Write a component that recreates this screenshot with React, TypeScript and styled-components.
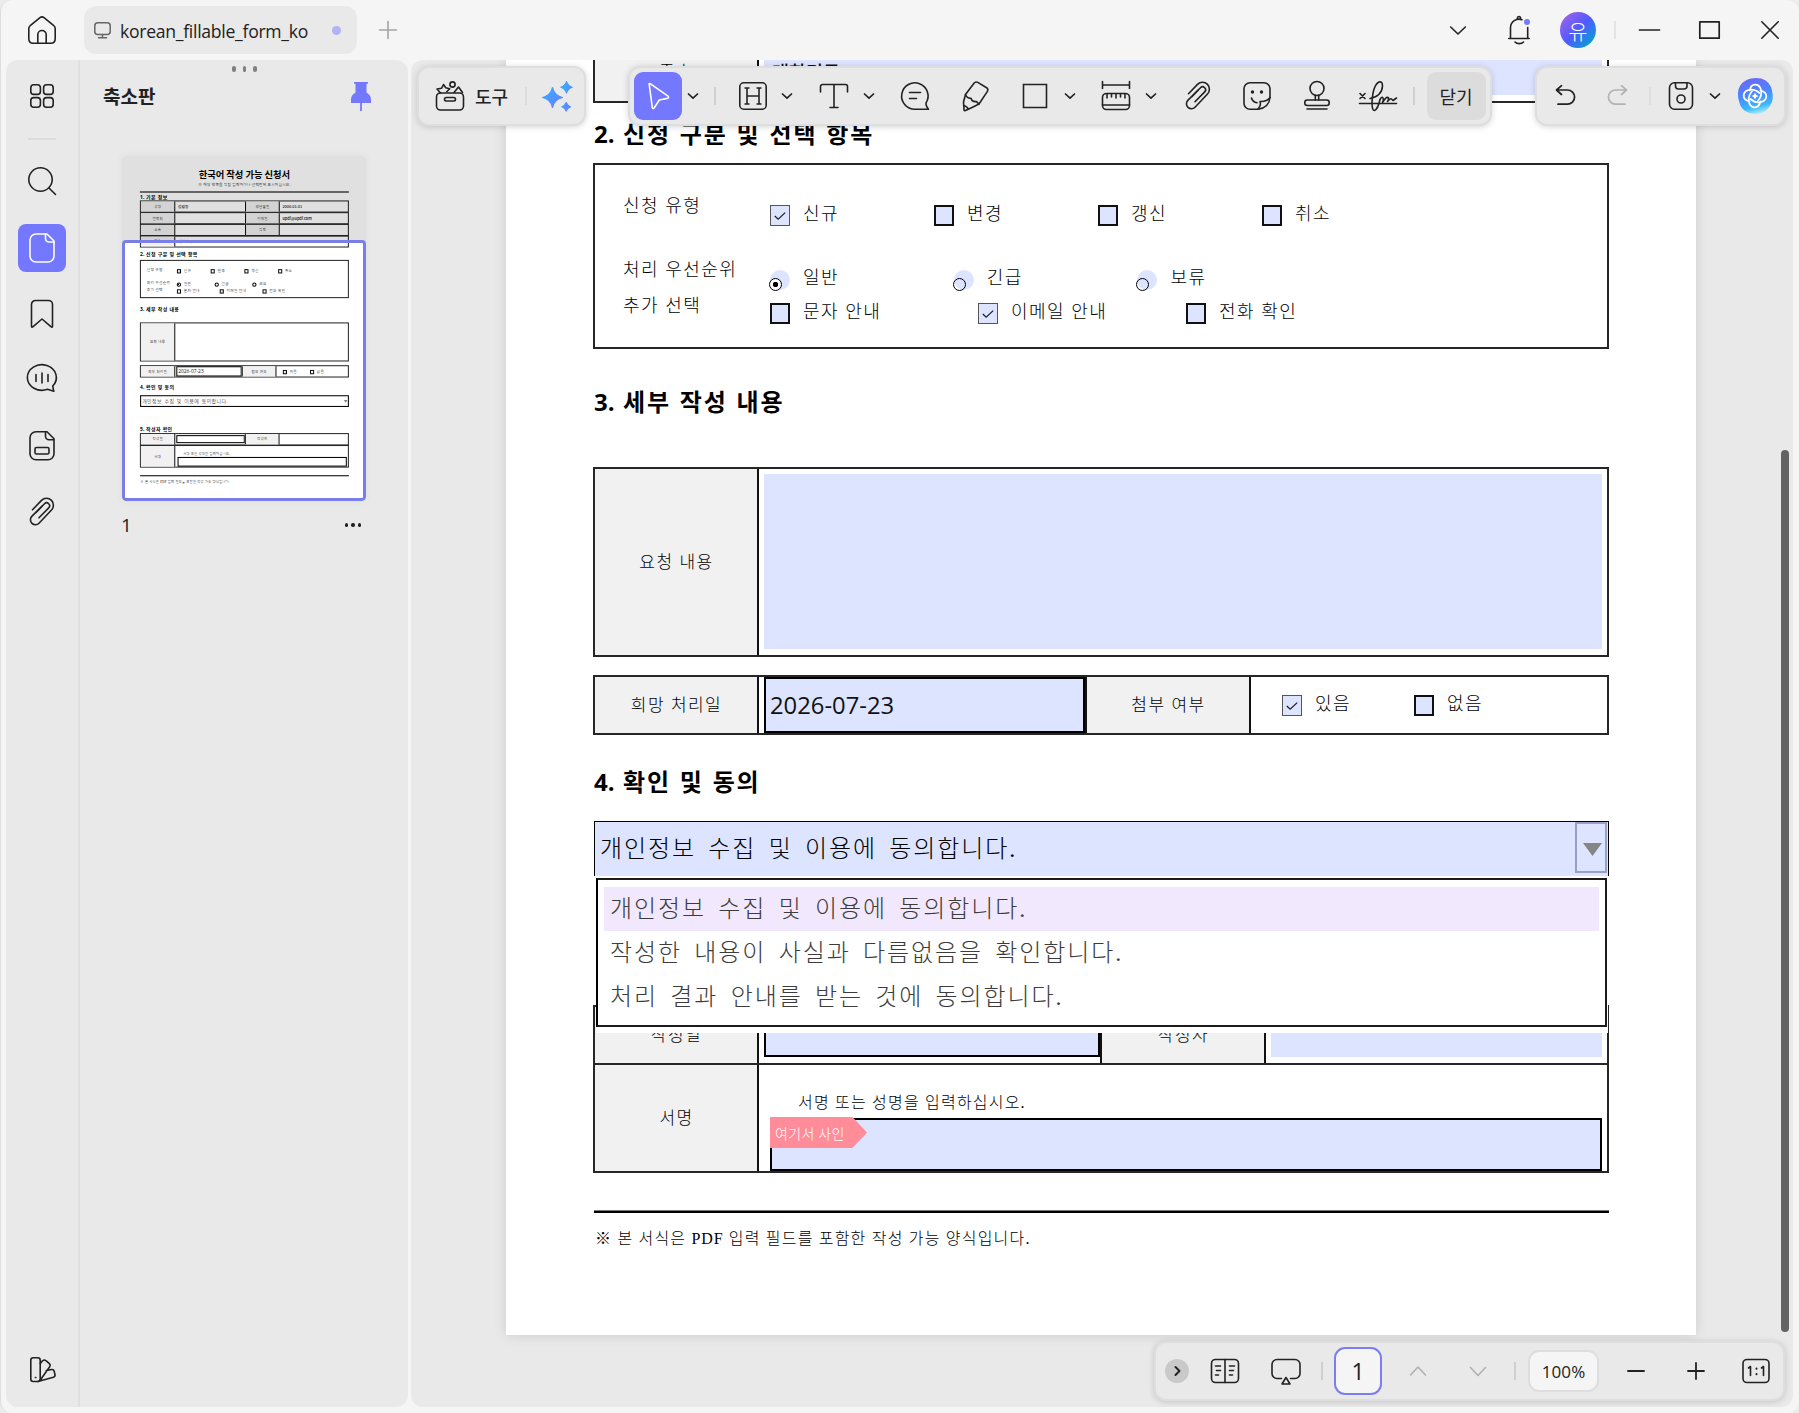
import React from "react";
import styled, { createGlobalStyle, css, ThemeProvider } from "styled-components";

declare module "styled-components" {
  export interface DefaultTheme {
    mini: boolean;
    line: number;
    field: string;
  }
}

const pageTheme = { mini: false, line: 2, field: "#dde4ff" };
const thumbTheme = { mini: true, line: 5, field: "transparent" };

const INK = "#222";
const ACCENT = "#7378ff";
const PANEL = "#e9e9e9";

const sans = `"Open Sans", "Noto Sans CJK KR", sans-serif`;
const korean = `"Noto Sans CJK KR", sans-serif`;
const serif = `"Liberation Serif", "Noto Sans CJK KR", serif`;

const GlobalStyle = createGlobalStyle`
  * { box-sizing: border-box; }
  body { margin: 0; background: #ececec; font-family: ${sans}; color: ${INK}; }
  svg { display: block; flex: none; overflow: visible; }
`;

/* ---------- window ---------- */

const Window = styled.div`
  width: 1799px;
  height: 1413px;
  display: flex;
  flex-direction: column;
  background: #f5f5f5;
  border-left: 1px solid #dedede;
  border-radius: 12px;
  overflow: hidden;
`;

const TitleBar = styled.header`
  height: 60px;
  flex: none;
  display: flex;
  align-items: center;
  padding-left: 27px;
`;

const Tab = styled.div`
  width: 273px;
  height: 48px;
  margin-left: 28px;
  padding: 0 16px 0 10px;
  border-radius: 12px;
  background: ${PANEL};
  display: flex;
  align-items: center;
`;

const TabName = styled.span`
  margin-left: 9px;
  padding-top: 1px;
  font-size: 17.6px;
  line-height: 26px;
  letter-spacing: -0.28px;
  white-space: nowrap;
  flex: 1;
`;

const Dot = styled.i`
  width: 9px;
  height: 9px;
  border-radius: 50%;
  background: #b0b3f5;
`;

const Gap = styled.div<{ $ml?: number; $mt?: number }>`
  flex: none;
  display: flex;
  align-items: center;
  justify-content: center;
  margin-left: ${(p) => p.$ml ?? 0}px;
  margin-top: ${(p) => p.$mt ?? 0}px;
`;

const Avatar = styled.div`
  width: 36px;
  height: 36px;
  margin-left: 30px;
  border-radius: 50%;
  background: linear-gradient(135deg, #a463e6 5%, #4f5bff 50%, #00a6cf 92%);
  color: #fff;
  font: 300 21px/36px ${korean};
  text-align: center;
`;

const Divider = styled.i<{ $ml: number; $h?: number; $c?: string }>`
  width: 2px;
  height: ${(p) => p.$h ?? 18}px;
  flex: none;
  margin-left: ${(p) => p.$ml}px;
  background: ${(p) => p.$c ?? "#cfcfcf"};
`;

const Body = styled.div`
  display: flex;
  height: 1347px;
  padding: 0 6px 0 5px;
  gap: 3px;
`;

const SidePanel = styled.aside`
  width: 402px;
  flex: none;
  display: flex;
  background: ${PANEL};
  border-radius: 12px;
`;

const Rail = styled.nav`
  width: 74px;
  border-right: 2px solid #e0e0e0;
  display: flex;
  flex-direction: column;
  align-items: center;
`;

const RailButton = styled.div<{ $active?: boolean; $mt: number }>`
  width: 48px;
  height: 48px;
  margin-top: ${(p) => p.$mt}px;
  display: flex;
  align-items: center;
  justify-content: center;
  border-radius: 8px;
  background: ${(p) => (p.$active ? ACCENT : "transparent")};
`;

const RailRule = styled.i`
  width: 28px;
  height: 2px;
  margin-top: 18px;
  background: #dcdcdc;
`;

const Thumbs = styled.section`
  flex: 1;
  display: flex;
  flex-direction: column;
`;

const Grip = styled.div`
  display: flex;
  gap: 7px;
  height: 18px;
  padding: 6px 0 0 152px;
  i { width: 3.5px; height: 6px; border-radius: 2px; background: #808080; }
`;

const ThumbHead = styled.div`
  height: 36px;
  padding: 0 37px 0 23px;
  display: flex;
  align-items: center;
  justify-content: space-between;
  font: 700 19px/30px ${korean};
`;

const ThumbFrame = styled.div`
  position: relative;
  width: 244px;
  height: 345px;
  margin: 42px 0 0 42px;
  background: #fff;
  border-radius: 4px;
  box-shadow: 0 0 8px rgba(0, 0, 0, 0.05);
  overflow: hidden;
`;

const ThumbScale = styled.div`
  width: 1190px;
  height: 1677px;
  transform: scale(0.2057);
  transform-origin: 0 0;
`;

const ThumbShade = styled.div`
  position: absolute;
  inset: 0 0 auto 0;
  height: 86px;
  background: rgba(0, 0, 0, 0.12);
`;

const ThumbView = styled.div`
  position: absolute;
  inset: 84px 0 0 0;
  border: 3px solid #7a7fe8;
  border-radius: 4px;
`;

const ThumbFoot = styled.div`
  display: flex;
  align-items: center;
  justify-content: space-between;
  width: 240px;
  margin: 10px 0 0 41px;
  font-size: 19px;
  line-height: 28px;
`;

const More = styled.span`
  display: flex;
  gap: 3px;
  i { width: 3.4px; height: 3.4px; border-radius: 50%; background: ${INK}; }
`;

/* ---------- document stage ---------- */

const Stage = styled.main`
  position: relative;
  flex: 1;
  background: ${PANEL};
  border-radius: 12px;
  overflow: hidden;
`;

const Sheet = styled.div`
  display: flow-root;
  width: 1190px;
  height: 1275px;
  margin-left: 95px;
  padding-left: 87px;
  background: #fff;
  box-shadow: 0 0 12px rgba(0, 0, 0, 0.13);
`;

const ThumbSheet = styled(Sheet)`
  height: 1677px;
  margin-left: 0;
  box-shadow: none;
`;

const Toolbar = styled.div<{ $x: number; $w: number; $bottom?: boolean }>`
  position: absolute;
  left: ${(p) => p.$x}px;
  width: ${(p) => p.$w}px;
  height: 60px;
  ${(p) => (p.$bottom ? "bottom: 6px;" : "top: 6px;")}
  display: flex;
  align-items: center;
  background: ${PANEL};
  border: 2px solid #dedede;
  border-radius: 12px;
  box-shadow: 0 1px 6px rgba(0, 0, 0, 0.16);
`;

const ToolLabel = styled.span`
  margin-left: 9px;
  font: 500 18px/26px ${korean};
`;

const ActiveTool = styled.div`
  width: 48px;
  height: 48px;
  flex: none;
  margin-left: 4px;
  display: flex;
  align-items: center;
  justify-content: center;
  background: ${ACCENT};
  border-radius: 9px;
`;

const CloseTool = styled.div`
  width: 59px;
  height: 48px;
  flex: none;
  margin-left: 12px;
  background: #dcdcdc;
  border-radius: 9px;
  font: 400 18px/48px ${korean};
  text-align: center;
`;

const NextDot = styled.div`
  width: 24px;
  height: 24px;
  margin-left: 9px;
  border-radius: 50%;
  background: #c9c9c9;
  display: flex;
  align-items: center;
  justify-content: center;
`;

const PageBox = styled.div`
  width: 48px;
  height: 48px;
  flex: none;
  margin-left: 11px;
  border: 2px solid #7b7fee;
  border-radius: 11px;
  background: #f5f5f5;
  font-size: 23px;
  line-height: 45px;
  text-align: center;
`;

const ZoomBox = styled.div`
  width: 71px;
  height: 42px;
  flex: none;
  margin-left: 12px;
  border: 2px solid #dedede;
  border-radius: 11px;
  background: #f5f5f5;
  font-size: 17px;
  line-height: 39px;
  letter-spacing: 0.1px;
  text-align: center;
`;

const ScrollThumb = styled.div`
  position: absolute;
  left: 1370px;
  top: 390px;
  width: 8px;
  height: 882px;
  border-radius: 4px;
  background: #636363;
`;

/* ---------- form ---------- */

const H = styled.h2<{ $h: number; $pt: number }>`
  margin: 0;
  height: ${(p) => p.$h}px;
  padding: ${(p) => p.$pt}px 0 0 1px;
  font: 700 24px/30px ${korean};
  letter-spacing: 1.9px;
  word-spacing: 1.5px;
  color: #000;
  white-space: nowrap;
  span { display: inline-block; width: 29px; letter-spacing: 0; font-family: "Open Sans", sans-serif; }
`;

const body = css`
  font: 300 18px/24px ${serif};
  letter-spacing: 1.45px;
  word-spacing: 0.2px;
  color: #000;
  white-space: nowrap;
`;

const note = css`
  font: 300 16px/24px ${serif};
  letter-spacing: 1.2px;
  color: #000;
  white-space: nowrap;
`;

const Row = styled.div<{ $h: number; $mt?: number }>`
  position: relative;
  display: flex;
  width: 1016px;
  height: ${(p) => p.$h}px;
  margin-top: ${(p) => p.$mt ?? 0}px;
  border: ${(p) => p.theme.line}px solid #262626;
`;

const Label = styled.div<{ $w?: number; $line?: boolean; $raise?: boolean }>`
  width: ${(p) => p.$w ?? 162}px;
  flex: none;
  padding: ${(p) => (p.$raise ? "0 0 4px" : "2px 0 0 1px")};
  background: #f1f1f1;
  display: flex;
  align-items: center;
  justify-content: center;
  ${(p) => p.$line && `border-left: ${p.theme.line}px solid #111;`}
  ${body}
  font-size: 17px;
`;

const Cell = styled.div<{ $w?: number; $pad?: string }>`
  ${(p) => (p.$w ? `width: ${p.$w}px; flex: none;` : "flex: 1;")}
  display: flex;
  padding: ${(p) => p.$pad ?? "5px"};
  border-left: ${(p) => p.theme.line}px solid #111;
`;

const InfoCell = styled(Cell)`
  align-items: center;
`;

const Field = styled.div<{ $border?: boolean }>`
  flex: 1;
  display: flex;
  align-items: center;
  background: ${(p) => p.theme.field};
  ${(p) => p.$border && `border: ${p.theme.line}px solid #000;`}
`;

const DateText = styled.span`
  padding-left: 4px;
  margin-top: -1px;
  font: 400 23.8px/30px "Open Sans", sans-serif;
  color: #111;
`;

const EntryText = styled.span<{ $raise?: boolean }>`
  padding: 0 0 ${(p) => (p.$raise ? 6 : 0)}px 8px;
  font: 500 18.5px/24px ${korean};
  color: #111;
`;

const OptionBox = styled.div`
  width: 1016px;
  height: 186px;
  padding: 29px 0 0 28px;
  border: ${(p) => p.theme.line}px solid #262626;
`;

const OptionRow = styled.div<{ $h: number; $step: number; $drop: number }>`
  display: grid;
  grid-template-columns: 147px repeat(4, ${(p) => p.$step}px);
  height: ${(p) => p.$h}px;
  ${body}
  > * + * { margin-top: ${(p) => p.$drop}px; }
`;

const AttachRow = styled.div`
  display: grid;
  grid-template-columns: 132px 132px;
`;

const Choice = styled.div`
  display: flex;
  height: 24px;
  gap: 13px;
  ${body}
`;

const Box = styled.i<{ $on?: boolean }>`
  width: 20px;
  height: 21px;
  flex: none;
  margin-top: 3px;
  display: flex;
  align-items: center;
  justify-content: center;
  background: ${(p) => p.theme.field};
  border: ${(p) => (p.theme.mini ? 5 : p.$on ? 1 : 2)}px solid ${(p) => (p.$on && !p.theme.mini ? "#555" : "#111")};
`;

const Radio = styled.i<{ $on?: boolean }>`
  width: 20px;
  height: 20px;
  flex: none;
  margin-top: 4px;
  border-radius: 50%;
  background: ${(p) => p.theme.field};
  display: flex;
  align-items: flex-end;
  &::after {
    content: "";
    width: 11px;
    height: 11px;
    margin: 0 0 -1px -1px;
    border-radius: 50%;
    border: ${(p) => (p.theme.mini ? 5 : 1.6)}px solid #000;
    background: ${(p) => (p.$on ? "radial-gradient(circle, #000 2.4px, #fff 3px)" : "transparent")};
  }
`;

const Combo = styled.div<{ $h: number }>`
  display: flex;
  align-items: flex-start;
  justify-content: space-between;
  width: 1015px;
  height: ${(p) => p.$h}px;
  margin-left: 1px;
  padding-right: 1px;
  background: ${(p) => p.theme.field};
  border: ${(p) => (p.theme.mini ? 5 : 1.5)}px solid #000;
  ${(p) => !p.theme.mini && "border-bottom: none;"}
`;

const choiceText = css`
  font: 300 24px/30px ${serif};
  letter-spacing: 1.92px;
  word-spacing: 4.4px;
  white-space: nowrap;
`;

const ComboText = styled.span`
  padding: 12px 0 0 5px;
  color: #000;
  ${choiceText}
`;

const ComboArrow = styled.div`
  width: 32px;
  height: 51px;
  padding: 4px 0 0 2px;
  display: flex;
  align-items: center;
  justify-content: center;
  border: 2px solid #98a0c4;
`;

const ListHolder = styled.div`
  position: relative;
  height: 127px;
`;

const List = styled.div`
  position: absolute;
  z-index: 2;
  left: 3px;
  top: 0;
  width: 1012px;
  height: 157px;
  padding: 2px 1px 6px 0;
  background: #fff;
`;

const ListInner = styled.div`
  height: 149px;
  padding: 7px 6px;
  border: 2px solid #1c1c1c;
  border-left-color: #000;
`;

const Option = styled.div<{ $on?: boolean }>`
  height: 44px;
  padding: 7px 0 0 6px;
  color: #3c3c3c;
  background: ${(p) => (p.$on ? "#f2e8fd" : "transparent")};
  ${choiceText}
`;

const SignCell = styled.div`
  flex: 1;
  display: flex;
  flex-direction: column;
  padding: 26px 5px 0 11px;
  border-left: ${(p) => p.theme.line}px solid #111;
`;

const SignHint = styled.span`
  padding-left: 28px;
  margin-bottom: 3px;
  ${note}
`;

const SignField = styled.div`
  position: relative;
  flex: 1;
  background: ${(p) => p.theme.field};
  border: ${(p) => p.theme.line}px solid #000;
`;

const SignTag = styled.div`
  position: absolute;
  left: -2px;
  top: -3px;
  width: 97px;
  height: 31px;
  padding-left: 5px;
  background: #ff8c98;
  clip-path: polygon(0 0, 85% 0, 100% 50%, 85% 100%, 0 100%);
  color: #fff;
  font: 300 14px/33px ${korean};
  letter-spacing: 0.4px;
`;

const Rule = styled.div`
  width: 1015px;
  height: ${(p) => (p.theme.mini ? 5 : 3)}px;
  margin: 37px 0 0 1px;
  background: linear-gradient(#777 0 1px, #000 1px);
`;

const Footnote = styled.p`
  margin: 14px 0 0 2px;
  ${note}
  span { font-weight: 400; letter-spacing: 0.9px; }
`;

const FormTop = styled.div`
  width: 1016px;
  padding-top: 57px;
  text-align: center;
`;

const FormTitle = styled.div`
  font: 700 45px/60px ${korean};
  color: #000;
`;

const FormSub = styled.div`
  margin-top: 14px;
  ${note}
  font-size: 18px;
  line-height: 20px;
`;

const TopRule = styled.div`
  height: 6px;
  margin-top: 21px;
  background: #222;
`;

const Tri = () => (
  <svg width="19" height="13" viewBox="0 0 19 13">
    <path d="M0 0h19l-9.5 13z" fill="#858585" />
  </svg>
);

const Tick = () => (
  <svg width="12" height="8" viewBox="0 0 12 8">
    <path d="M.8 4l3.4 3.2L11.2.6" fill="none" stroke="#222" strokeWidth="1.3" />
  </svg>
);

const Check = ({ on, children }: { on?: boolean; children: string }) => (
  <Choice>
    <Box $on={on}>{on && <Tick />}</Box>
    {children}
  </Choice>
);

const Pick = ({ on, children }: { on?: boolean; children: string }) => (
  <Choice>
    <Radio $on={on} />
    {children}
  </Choice>
);

const CONSENT = "개인정보 수집 및 이용에 동의합니다.";

function InfoRow({ a, av, b, bv, mt }: { a: string; av?: string; b: string; bv?: string; mt?: number }) {
  return (
    <Row $h={59} $mt={mt}>
      <Label>{a}</Label>
      <InfoCell $w={344}>
        <EntryText>{av}</EntryText>
      </InfoCell>
      <Label $w={164} $line>{b}</Label>
      <InfoCell>
        <EntryText>{bv}</EntryText>
      </InfoCell>
    </Row>
  );
}

function Form({ mini }: { mini?: boolean }) {
  return (
    <>
      {mini && (
        <>
          <FormTop>
            <FormTitle>한국어 작성 가능 신청서</FormTitle>
            <FormSub>※ 해당 항목을 직접 입력하거나 선택란에 표시하십시오.</FormSub>
            <TopRule />
          </FormTop>
          <H $h={38} $pt={8}>
            <span>1.</span>기본 정보
          </H>
          <InfoRow a="성명" av="김길동" b="생년월일" bv="2000.01.01" />
          <InfoRow a="연락처" b="이메일" bv="updf@updf.com" mt={-2} />
          <InfoRow a="소속" b="직책" mt={-2} />
        </>
      )}
      <Row $h={58} $mt={mini ? -2 : -15}>
        <Label $raise>주소</Label>
        <Cell $pad="5px 5px 6px">
          <Field>
            <EntryText $raise>대한민국</EntryText>
          </Field>
        </Cell>
      </Row>
      <H $h={60} $pt={15}>
        <span>2.</span>신청 구분 및 선택 항목
      </H>
      <OptionBox>
        <OptionRow $h={64} $step={164} $drop={8}>
          <div>신청 유형</div>
          <Check on>신규</Check>
          <Check>변경</Check>
          <Check>갱신</Check>
          <Check>취소</Check>
        </OptionRow>
        <OptionRow $h={36} $step={183.7} $drop={8}>
          <div>처리 우선순위</div>
          <Pick on>일반</Pick>
          <Pick>긴급</Pick>
          <Pick>보류</Pick>
        </OptionRow>
        <OptionRow $h={30} $step={208} $drop={6}>
          <div>추가 선택</div>
          <Check>문자 안내</Check>
          <Check on>이메일 안내</Check>
          <Check>전화 확인</Check>
        </OptionRow>
      </OptionBox>
      <H $h={118} $pt={37}>
        <span>3.</span>세부 작성 내용
      </H>
      <Row $h={190}>
        <Label>요청 내용</Label>
        <Cell $pad="5px 5px 6px">
          <Field />
        </Cell>
      </Row>
      <Row $h={60} $mt={18}>
        <Label>희망 처리일</Label>
        <Cell $w={328} $pad="0 0 0 5px">
          <Field $border>
            <DateText>2026-07-23</DateText>
          </Field>
        </Cell>
        <Label $w={164} $line>첨부 여부</Label>
        <Cell $pad="15px 0 0 31px">
          <AttachRow>
            <Check on>있음</Check>
            <Check>없음</Check>
          </AttachRow>
        </Cell>
      </Row>
      <H $h={86} $pt={31}>
        <span>4.</span>확인 및 동의
      </H>
      <Combo $h={mini ? 57 : 55}>
        <ComboText>{CONSENT}</ComboText>
        {mini ? (
          <Gap $mt={18}>
            <Tri />
          </Gap>
        ) : (
          <ComboArrow>
            <Tri />
          </ComboArrow>
        )}
      </Combo>
      {mini ? (
        <H $h={127} $pt={90}>
          <span>5.</span>작성자 확인
        </H>
      ) : (
        <ListHolder>
          <List>
            <ListInner>
              <Option $on>{CONSENT}</Option>
              <Option>작성한 내용이 사실과 다름없음을 확인합니다.</Option>
              <Option>처리 결과 안내를 받는 것에 동의합니다.</Option>
            </ListInner>
          </List>
        </ListHolder>
      )}
      <Row $h={60} $mt={mini ? 0 : 2}>
        <Label>작성일</Label>
        <Cell $w={343} $pad="5px 0 6px 5px">
          <Field $border />
        </Cell>
        <Label $w={164} $line>작성자</Label>
        <Cell $pad="5px 5px 6px">
          <Field />
        </Cell>
      </Row>
      <Row $h={110} $mt={-2}>
        <Label>서명</Label>
        <SignCell>
          <SignHint>서명 또는 성명을 입력하십시오.</SignHint>
          <SignField>{!mini && <SignTag>여기서 사인</SignTag>}</SignField>
        </SignCell>
      </Row>
      <Rule />
      <Footnote>
        ※ 본 서식은 <span>PDF</span> 입력 필드를 포함한 작성 가능 양식입니다.
      </Footnote>
    </>
  );
}

/* ---------- icons ---------- */

type IconProps = { w?: number; h?: number; c?: string; s?: number; children: React.ReactNode };
const Icon = ({ w = 32, h = 32, c = INK, s = 1.6, children }: IconProps) => (
  <svg width={w} height={h} viewBox={`0 0 ${w} ${h}`} fill="none" stroke={c} strokeWidth={s} strokeLinecap="round" strokeLinejoin="round">
    {children}
  </svg>
);

const Chev = ({ c = INK, big, up }: { c?: string; big?: boolean; up?: boolean }) =>
  big ? (
    <Icon w={20} h={20} c={c}>
      <path d={up ? "M2.5 14L10 6l7.5 8" : "M2.5 6.5L10 14.5l7.5-8"} />
    </Icon>
  ) : (
    <Icon w={16} h={16} c={c} s={1.7}>
      <path d="M3.5 6L8 10.2 12.5 6" />
    </Icon>
  );

const HomeIcon = () => (
  <Icon w={28} h={28}>
    <path d="M.8 12.5q0-2 1.7-3.2L12 1.6q2-1.4 4 0l9.5 7.7q1.7 1.2 1.7 3.2v10.3q0 4.4-4.4 4.4H5.2Q.8 27.2.8 22.8Z" />
    <path d="M9.8 27v-8.3a4.2 4.2 0 0 1 8.4 0V27" />
  </Icon>
);

const Clip = () => (
  <Icon>
    <path
      d="M6.5 14.5 15.5 5.2a7 7 0 0 1 10 0 7 7 0 0 1 0 9.6L13 28a4.9 4.9 0 0 1-7.2-6.800L18.500 8.500a2.900 2.900 0 0 1 4.200 4.200L13 22.600"
      transform="translate(0 -.8)"
    />
    <path d="M10 16.500 16 10.300" />
  </Icon>
);

const FilePath = "M10 2H21L28 9V24a6 6 0 0 1-6 6H10a6 6 0 0 1-6-6V8a6 6 0 0 1 6-6Z";

export default function App() {
  return (
    <>
      <GlobalStyle />
      <Window>
        <TitleBar>
          <HomeIcon />
          <Tab>
            <Icon w={17} h={17} c="#666" s={1.5}>
              <rect x=".8" y=".8" width="15.4" height="11.6" rx="3" />
              <path d="M8.5 12.5v3M4.5 15.8h8" />
            </Icon>
            <TabName>korean_fillable_form_ko</TabName>
            <Dot />
          </Tab>
          <Gap $ml={22}>
            <Icon w={18} h={18} c="#a4a4a4">
              <path d="M9 .5v17M.5 9h17" />
            </Icon>
          </Gap>
          <Gap $ml={1051}>
            <Icon w={20} h={20}>
              <path d="M2.7 7 10 14l7.3-7" />
            </Icon>
          </Gap>
          <Gap $ml={40}>
            <Icon w={22} h={28}>
              <path d="M.8 22.5h20.4M2.5 22V11.5A8.500 8.500 0 0 1 14 3.700M19.700 11.500V22M9.500 2.700a1.600 1.600 0 1 1 3 0M7 26a5 3.500 0 0 0 8.500 0" />
              <circle cx="19" cy="6" r="3" fill={ACCENT} stroke="none" />
            </Icon>
          </Gap>
          <Avatar>유</Avatar>
          <Divider $ml={18} $c="#e4e4e4" />
          <Gap $ml={23}>
            <Icon w={21} h={21} s={1.7}>
              <path d="M.5 10h20" />
            </Icon>
          </Gap>
          <Gap $ml={39}>
            <Icon w={21} h={18} s={1.7}>
              <path d="M.8.8h19.4v16.4H.8z" />
            </Icon>
          </Gap>
          <Gap $ml={41}>
            <Icon w={18} h={18}>
              <path d="M.8.8l16.4 16.4M17.2.8.8 17.2" />
            </Icon>
          </Gap>
        </TitleBar>

        <Body>
          <SidePanel>
            <Rail>
              <RailButton $mt={12}>
                <Icon w={24} h={24}>
                  <rect x=".8" y=".8" width="9.6" height="9.6" rx="3" />
                  <rect x="13.6" y=".8" width="9.6" height="9.6" rx="3" />
                  <rect x=".8" y="13.6" width="9.6" height="9.6" rx="3" />
                  <rect x="13.6" y="13.6" width="9.6" height="9.6" rx="3" />
                </Icon>
              </RailButton>
              <RailRule />
              <RailButton $mt={17}>
                <Icon w={28} h={28}>
                  <circle cx="12.5" cy="12.5" r="11.7" />
                  <path d="M21 21l6.5 6.5" />
                </Icon>
              </RailButton>
              <RailButton $mt={19} $active>
                <Icon c="#fff">
                  <path d={FilePath} />
                  <path d="M19.500 2.500v4a3.500 3.500 0 0 0 3.500 3.500h4.500" />
                </Icon>
              </RailButton>
              <RailButton $mt={18}>
                <Icon>
                  <path d="M9.500 2.500h13a4 4 0 0 1 4 4V28q0 2-1.600.7L16 21l-8.900 7.700q-1.600 1.300-1.600-.7V6.500a4 4 0 0 1 4-4Z" />
                </Icon>
              </RailButton>
              <RailButton $mt={16}>
                <Icon>
                  <path d="M27.800 29.300 21.500 27.300a14.500 12.800 0 1 1 5.200-3.300Z" />
                  <path d="M10 12.500v7M16 11v10M22 12.500v7" />
                </Icon>
              </RailButton>
              <RailButton $mt={20}>
                <Icon>
                  <path d={FilePath} transform="translate(0 -.3)" />
                  <path d="M19.500 2.200v4A3.500 3.500 0 0 0 23 9.700h4.500" />
                  <rect x="9" y="17.500" width="14" height="6.500" rx="1.500" />
                </Icon>
              </RailButton>
              <RailButton $mt={18}>
                <Clip />
              </RailButton>
              <RailButton $mt={811}>
                <Icon>
                  <rect x="4.800" y="2.800" width="9.400" height="23.700" rx="2.500" />
                  <path d="M14.300 8.500l2.300-2.700q1.500-1.500 3.300-.2l3.500 3q1.500 1.500.3 3.200L14 25.500M20.300 15.500l5.400-1q2-.2 2.500 1.700l.8 3.500q.3 2-1.600 2.600L12 26.500" />
                  <circle cx="9.500" cy="22.500" r=".6" fill={INK} strokeWidth=".6" />
                </Icon>
              </RailButton>
            </Rail>
            <Thumbs>
              <Grip>
                <i />
                <i />
                <i />
              </Grip>
              <ThumbHead>
                축소판
                <svg width="20" height="29" viewBox="0 0 20 29">
                  <path d="M3 0h14v1.800h-1.500v8.700q4.500 2.500 4.500 7v3.500H0v-3.500q0-4.500 4.500-7V1.800H3z" fill={ACCENT} />
                  <path d="M10 21v8" stroke={ACCENT} strokeWidth="1.800" />
                </svg>
              </ThumbHead>
              <ThumbFrame>
                <ThemeProvider theme={thumbTheme}>
                  <ThumbScale>
                    <ThumbSheet>
                      <Form mini />
                    </ThumbSheet>
                  </ThumbScale>
                </ThemeProvider>
                <ThumbShade />
                <ThumbView />
              </ThumbFrame>
              <ThumbFoot>
                1
                <More>
                  <i />
                  <i />
                  <i />
                </More>
              </ThumbFoot>
            </Thumbs>
          </SidePanel>

          <Stage>
            <ThemeProvider theme={pageTheme}>
              <Sheet>
                <Form />
              </Sheet>
            </ThemeProvider>
            <ScrollThumb />

            <Toolbar $x={6} $w={169}>
              <Gap $ml={15}>
                <Icon>
                  <rect x="2.500" y="13" width="27" height="17" rx="4" />
                  <rect x="10.500" y="17.500" width="11" height="3.500" rx="1.700" />
                  <circle cx="18.500" cy="4.500" r="2.600" />
                  <path d="M6.500 13 3 9l4.500-.7L9.500 4.500l2.200 3.200 4 1-3 3M20 12.500l4.500-5.500 4 5.500" />
                </Icon>
              </Gap>
              <ToolLabel>도구</ToolLabel>
              <Divider $ml={17} $c="#dcdcdc" />
              <Gap $ml={15}>
                <svg width="31" height="31" viewBox="0 0 31 31">
                  <defs>
                    <linearGradient id="spark" x1="0" y1="0" x2="1" y2="1">
                      <stop offset="0" stopColor="#35b0ff" />
                      <stop offset="1" stopColor="#6a7dff" />
                    </linearGradient>
                  </defs>
                  <g fill="url(#spark)" stroke="url(#spark)" strokeWidth="1.200" strokeLinejoin="round">
                    <path d="M10.500 6.500q1.800 8.200 10 10-8.200 1.800-10 10-1.800-8.200-10-10 8.200-1.800 10-10Z" />
                    <path d="M24.500.6q1.400 4.300 5.700 5.700-4.300 1.400-5.700 5.700-1.400-4.300-5.700-5.700 4.300-1.400 5.700-5.700ZM24.200 21.500q1.200 3.200 4.300 4.300-3.100 1.100-4.300 4.300-1.200-3.200-4.300-4.300 3.100-1.100 4.300-4.300Z" />
                  </g>
                </svg>
              </Gap>
            </Toolbar>

            <Toolbar $x={217} $w={864}>
              <ActiveTool>
                <Icon c="#fff">
                  <path d="M7.300 4.800Q6.500 3 8.200 3.700L26 16.200q1.500 1.600-.7 2.200l-8 1.600-5 7.800q-1.300 1.700-2-.3Z" />
                </Icon>
              </ActiveTool>
              <Gap $ml={2.5}><Chev /></Gap>
              <Divider $ml={13.5} />
              <Gap $ml={21}>
                <Icon>
                  <rect x="2.800" y="2.800" width="26.400" height="26.400" rx="4" />
                  <path d="M10 8v16M22 8v16M10 16h12M7.500 8h5M19.500 8h5M7.500 24h5M19.500 24h5" strokeLinecap="butt" />
                </Icon>
              </Gap>
              <Gap $ml={10}><Chev /></Gap>
              <Gap $ml={22.5}>
                <Icon>
                  <path d="M2.500 12V6.500a2 2 0 0 1 2-2h23a2 2 0 0 1 2 2V12M16 4.500V27.500M12 27.500h8" />
                </Icon>
              </Gap>
              <Gap $ml={11}><Chev /></Gap>
              <Gap $ml={22}>
                <Icon>
                  <path d="M29.500 29.200H15.800a13.200 13.200 0 1 1 11.300-6.300Q26.500 25.500 29.500 29.200Z" />
                  <path d="M10.500 12.500h11M10.500 18.500h7" />
                </Icon>
              </Gap>
              <Gap $ml={29.5}>
                <Icon>
                  <path d="M4 29.500 3.500 22 5.500 14.500 14 3.200q1.500-2 3.800-.8l8.800 5.300q2 1.500.8 3.700L19 24l-7 3.500-6.500 3q-1.500.5-1.500-1Z" />
                  <path d="M5.500 14.500q1.500 4 5.500 3.700 1 4 5.500 3.300 1 1.500 2.500 2.500M3.800 25.500q3.500 1 4.500 3.800" />
                </Icon>
              </Gap>
              <Gap $ml={27}>
                <Icon>
                  <path d="M4.500 4.500h23v23h-23z" strokeLinejoin="miter" />
                </Icon>
              </Gap>
              <Gap $ml={10.5}><Chev /></Gap>
              <Gap $ml={22}>
                <Icon>
                  <path d="M2.500 1.500v7M29.500 1.500v7M2.500 5h27" />
                  <rect x="2.500" y="13.500" width="27" height="16" rx="4" />
                  <path d="M2.500 25h27M7 14v4M11.500 14v3M16 14v4M20.500 14v3M25 14v4" />
                </Icon>
              </Gap>
              <Gap $ml={11.5}><Chev /></Gap>
              <Gap $ml={22.5}><Clip /></Gap>
              <Gap $ml={27}>
                <Icon>
                  <path d="M17 29.200H9a6 6 0 0 1-6-6V8.800a6 6 0 0 1 6-6h14a6 6 0 0 1 6 6V17.500Q28 28 17 29.200Z" />
                  <path d="M17 29q3.500-4 2-7.500Q25.500 22 29 17.500M10.500 18q1 4 5.500 4.800" />
                  <circle cx="11.500" cy="12" r=".9" fill={INK} />
                  <circle cx="20.500" cy="12" r=".9" fill={INK} />
                </Icon>
              </Gap>
              <Gap $ml={28}>
                <Icon>
                  <circle cx="16" cy="8.500" r="7" />
                  <path d="M14.300 15.300v4.700M17.700 15.300v4.700M6 29h20" />
                  <rect x="3.800" y="20" width="24.400" height="5.500" rx="2.500" />
                </Icon>
              </Gap>
              <Gap $ml={25}>
                <Icon w={40} h={32}>
                  <path d="M2 13.500l5 5M7 13.500l-5 5M1.500 23.500h37" />
                  <path d="M12 18.500Q24 16 24.500 6q0-5-3.500-4Q15 5 14 22q0 9 2.500 8.500Q20 29 22 19.500q2-3.500 3-1.500t-.5 4.500q3.500-6 5.500-5 1.500 1-.5 4 3-3.500 4-2.500t1.500 1.500l3.500-2.500" />
                </Icon>
              </Gap>
              <Divider $ml={15} />
              <CloseTool>닫기</CloseTool>
            </Toolbar>

            <Toolbar $x={1124} $w={251}>
              <Gap $ml={12}>
                <Icon s={1.7}>
                  <path d="M12.500 5.700 7.500 10l5 4.500M8 10h10.500a6.800 6.800 0 0 1 0 14.200H9" />
                </Icon>
              </Gap>
              <Gap $ml={21}>
                <Icon s={1.7} c="#b2b2b2">
                  <path d="M19.500 5.700l5 4.300-5 4.500M24 10H13.500a6.800 6.800 0 0 0 0 14.200H23" />
                </Icon>
              </Gap>
              <Divider $ml={15} $c="#dedede" />
              <Gap $ml={14}>
                <Icon>
                  <rect x="4.500" y="2.800" width="23" height="26.400" rx="5" />
                  <path d="M10.500 3v3a3 3 0 0 0 3 3h5.500a3 3 0 0 0 3-3V3" />
                  <circle cx="16" cy="19" r="4" />
                </Icon>
              </Gap>
              <Gap $ml={10}><Chev /></Gap>
              <Gap $ml={14}>
                <svg width="36" height="36" viewBox="0 0 36 36">
                  <defs>
                    <linearGradient id="ai" x1=".3" y1="0" x2=".55" y2="1">
                      <stop offset="0" stopColor="#6d68f5" />
                      <stop offset=".45" stopColor="#4a86ff" />
                      <stop offset=".8" stopColor="#3bb8fa" />
                      <stop offset="1" stopColor="#a5ecf6" />
                    </linearGradient>
                  </defs>
                  <path d="M3 8Q8 0 19 0t15 9q3 9 1 15-5 12-16 12Q5 35 2.500 25-1 14 3 8Z" fill="url(#ai)" />
                  <g fill="none" stroke="#fff" strokeWidth="1.800" strokeLinecap="round">
                    {[0, 90, 180, 270].map((a) => (
                      <path key={a} d="M12.500 12.500Q14 6.500 18.500 6.700q5 .3 5.800 7 .3 5-3.300 8.800" transform={`rotate(${a} 18 18)`} />
                    ))}
                  </g>
                  <path d="M18 14.500q.6 2.900 3.500 3.500-2.900.6-3.500 3.500-.6-2.900-3.500-3.500 2.900-.6 3.500-3.500Z" fill="#fff" />
                </svg>
              </Gap>
            </Toolbar>

            <Toolbar $x={743} $w={631} $bottom>
              <NextDot>
                <Icon w={10} h={12} s={2}>
                  <path d="M3.500 2 7.500 6l-4 4" />
                </Icon>
              </NextDot>
              <Gap $ml={20}>
                <Icon>
                  <rect x="2.500" y="4.500" width="27" height="23" rx="4" />
                  <path d="M16 4.500v23M6.500 11h5M7.500 15.500h4M6.500 20h3M20.500 11h5M20.500 15.500h4M20.500 20h3" />
                </Icon>
              </Gap>
              <Gap $ml={29}>
                <Icon>
                  <path d="M11.500 23.500H7a5 5 0 0 1-5-5v-9a5 5 0 0 1 5-5h18a5 5 0 0 1 5 5v9a5 5 0 0 1-5 5h-4.500M16 22.500l4 6.500h-8z" />
                </Icon>
              </Gap>
              <Divider $ml={19} />
              <PageBox>1</PageBox>
              <Gap $ml={26}><Chev big up c="#b0b0b0" /></Gap>
              <Gap $ml={40}><Chev big c="#b0b0b0" /></Gap>
              <Divider $ml={26} />
              <ZoomBox>100%</ZoomBox>
              <Gap $ml={26.5}>
                <Icon w={20} h={20} s={1.8}>
                  <path d="M2 10h16" />
                </Icon>
              </Gap>
              <Gap $ml={40}>
                <Icon w={20} h={20} s={1.8}>
                  <path d="M2 10h16M10 2v16" />
                </Icon>
              </Gap>
              <Gap $ml={34.5}>
                <Icon>
                  <rect x="3" y="4.500" width="26" height="23" rx="4" />
                  <path d="M8.500 13l2-1.500v9M21.500 13l2-1.500v9" />
                  <path d="M16.500 13.500v.3M16.500 19v.3" strokeWidth="2" />
                </Icon>
              </Gap>
            </Toolbar>
          </Stage>
        </Body>
      </Window>
    </>
  );
}
